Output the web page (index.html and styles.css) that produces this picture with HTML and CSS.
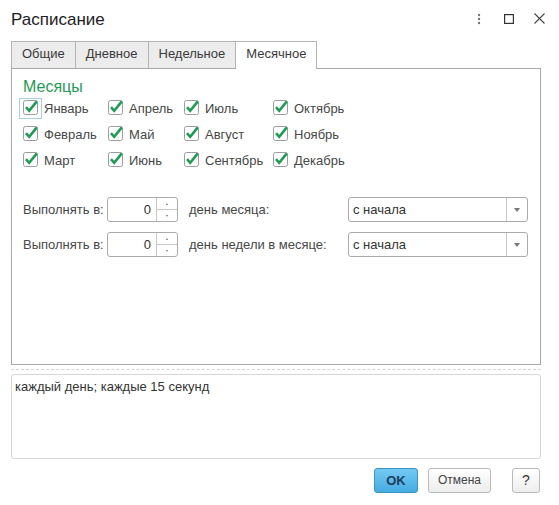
FILE: index.html
```html
<!DOCTYPE html>
<html lang="ru">
<head>
  <meta charset="UTF-8">
  <meta name="viewport" content="width=device-width, initial-scale=1.0">
  <title>Расписание</title>
  <link rel="stylesheet" href="styles.css">
</head>
<body>
  <div class="header">
    <div class="title">Расписание</div>
    <div class="win-icons">
      <span class="win-btn">
        <svg width="4" height="12" viewBox="0 0 4 12"><circle cx="2" cy="2" r="1.2" fill="#777"/><circle cx="2" cy="6" r="1.2" fill="#777"/><circle cx="2" cy="10" r="1.2" fill="#777"/></svg>
      </span>
      <span class="win-btn">
        <svg width="10" height="10" viewBox="0 0 10 10"><rect x="0.6" y="0.6" width="8.8" height="8.8" fill="none" stroke="#333" stroke-width="1.2"/></svg>
      </span>
      <span class="win-btn">
        <svg width="11" height="11" viewBox="0 0 11 11"><path d="M0.5 0.5 L10.5 10.5 M10.5 0.5 L0.5 10.5" stroke="#444" stroke-width="1.1"/></svg>
      </span>
    </div>
  </div>

  <div class="content">
    <div class="tabs">
      <div class="tab">Общие</div>
      <div class="tab">Дневное</div>
      <div class="tab">Недельное</div>
      <div class="tab active">Месячное</div>
    </div>

    <div class="panel">
      <div class="group-title">Месяцы</div>
      <div class="months" id="months"></div>

      <div class="field-row first-row">
        <span class="field-label">Выполнять в:</span>
        <div class="spin">
          <span class="spin-value">0</span>
          <span class="spin-btns"><span class="spin-up"></span><span class="spin-down"></span></span>
        </div>
        <span class="field-label2">день месяца:</span>
        <div class="select">
          <span class="select-value">с начала</span>
          <span class="select-arrow"></span>
        </div>
      </div>
      <div class="field-row">
        <span class="field-label">Выполнять в:</span>
        <div class="spin">
          <span class="spin-value">0</span>
          <span class="spin-btns"><span class="spin-up"></span><span class="spin-down"></span></span>
        </div>
        <span class="field-label2">день недели в месяце:</span>
        <div class="select">
          <span class="select-value">с начала</span>
          <span class="select-arrow"></span>
        </div>
      </div>
    </div>

    <div class="divider"></div>
    <div class="summary">каждый день; каждые 15 секунд</div>

    <div class="actions">
      <div class="btn btn-ok">OK</div>
      <div class="btn">Отмена</div>
      <div class="btn btn-help">?</div>
    </div>
  </div>

  <script>
    const months = ['Январь', 'Апрель', 'Июль', 'Октябрь',
                    'Февраль', 'Май', 'Август', 'Ноябрь',
                    'Март', 'Июнь', 'Сентябрь', 'Декабрь'];
    const wrap = document.getElementById('months');
    const check = '<svg width="15" height="15" viewBox="0 0 15 15">' +
      '<rect x="0.5" y="0.5" width="14" height="14" rx="2" fill="#fff" stroke="#9c9c9c"/>' +
      '<path d="M3 7.2 L6.2 10.8 L13.8 1.4" fill="none" stroke="#1f9b55" stroke-width="2.6"/></svg>';
    months.forEach((name, i) => {
      const item = document.createElement('label');
      item.className = 'month';
      item.innerHTML = `<span class="box${i === 0 ? ' focused' : ''}">${check}</span><span>${name}</span>`;
      wrap.appendChild(item);
    });
  </script>
</body>
</html>
```

FILE: styles.css
```css
html, body {
  margin: 0;
  padding: 0;
  background: #fff;
}
body {
  font-family: "Liberation Sans", Arial, sans-serif;
  font-size: 13px;
  color: #474747;
}
.header {
  display: flex;
  justify-content: space-between;
  align-items: flex-start;
  height: 41px;
  box-sizing: border-box;
  padding: 9px 5px 0 11px;
}
.title {
  font-size: 17px;
  line-height: 22px;
  color: #222;
}
.win-icons {
  display: flex;
  height: 19px;
}
.win-btn {
  width: 30px;
  display: flex;
  align-items: center;
  justify-content: center;
}
.content {
  padding: 0 18px 0 11px;
}
.tabs {
  display: flex;
  height: 27px;
}
.tab {
  box-sizing: border-box;
  height: 27px;
  padding: 0 10px 2px;
  line-height: 24px;
  border: 1px solid #b4b4b4;
  border-bottom: none;
  border-left: none;
  background: #ececec;
  color: #3a3a3a;
}
.tab:first-child {
  border-left: 1px solid #b4b4b4;
}
.tab.active {
  background: #fff;
  height: 28px;
  position: relative;
  z-index: 1;
}
.panel {
  box-sizing: border-box;
  height: 297px;
  border: 1px solid #a8a8a8;
  padding: 9px 11px 0;
}
.group-title {
  font-size: 16px;
  line-height: 17px;
  color: #1f9b55;
}
.months {
  display: grid;
  grid-template-columns: 85px 76px 89px auto;
  grid-auto-rows: 26px;
  margin-left: -4px;
}
.month {
  display: flex;
  align-items: center;
}
.box {
  box-sizing: border-box;
  width: 23px;
  height: 21px;
  padding: 1px 0 0 3px;
  border: 1px solid transparent;
  margin-right: 2px;
  display: flex;
}
.box svg {
  overflow: visible;
}
.box.focused {
  border-color: #a6cfe4;
}
.field-row {
  display: flex;
  align-items: center;
  height: 25px;
  margin-top: 10px;
}
.field-row.first-row {
  margin-top: 24px;
}
.field-label {
  width: 84px;
}
.field-label2 {
  width: 159px;
  margin-left: 11px;
}
.spin {
  box-sizing: border-box;
  width: 71px;
  height: 25px;
  border: 1px solid #ababab;
  border-radius: 3px;
  display: flex;
}
.spin-value {
  flex: 1;
  text-align: right;
  line-height: 23px;
  padding-right: 5px;
  color: #333;
}
.spin-btns {
  width: 20px;
  border-left: 1px solid #c8c8c8;
  display: flex;
  flex-direction: column;
}
.spin-up, .spin-down {
  flex: 1;
  display: flex;
  align-items: center;
  justify-content: center;
}
.spin-down {
  border-top: 1px solid #c8c8c8;
}
.spin-up::after, .spin-down::after {
  content: "";
  border-left: 1.5px solid transparent;
  border-right: 1.5px solid transparent;
}
.spin-up::after {
  border-bottom: 2px solid #777;
}
.spin-down::after {
  border-top: 2px solid #777;
}
.select {
  box-sizing: border-box;
  width: 180px;
  height: 25px;
  border: 1px solid #ababab;
  border-radius: 3px;
  display: flex;
}
.select-value {
  flex: 1;
  padding-left: 4px;
  line-height: 23px;
  color: #333;
}
.select-arrow {
  width: 20px;
  border-left: 1px solid #c8c8c8;
  display: flex;
  align-items: center;
  justify-content: center;
}
.select-arrow::after {
  content: "";
  border-left: 3px solid transparent;
  border-right: 3px solid transparent;
  border-top: 4px solid #777;
}
.divider {
  margin-top: 4px;
  border-top: 1px dashed #d4d4d4;
}
.summary {
  box-sizing: border-box;
  height: 85px;
  margin-top: 4px;
  border: 1px solid #d6d6d6;
  border-radius: 3px;
  padding: 4px 3px;
  line-height: 16px;
  color: #333;
}
.actions {
  display: flex;
  justify-content: flex-end;
  margin-top: 9px;
  padding-right: 1px;
}
.btn {
  box-sizing: border-box;
  height: 25px;
  line-height: 23px;
  padding: 0 9px;
  font-size: 12px;
  border: 1px solid #bababa;
  border-radius: 3px;
  background: linear-gradient(#ffffff, #ededed);
  color: #444;
  margin-left: 10px;
}
.btn-ok {
  width: 44px;
  padding: 0;
  text-align: center;
  font-weight: bold;
  font-size: 13px;
  color: #1d3d5c;
  border-color: #3d92c4;
  background: linear-gradient(#74c9f2, #45ace2);
}
.btn-help {
  width: 28px;
  padding: 0;
  text-align: center;
  margin-left: 21px;
  color: #333;
  font-size: 14px;
}
```
